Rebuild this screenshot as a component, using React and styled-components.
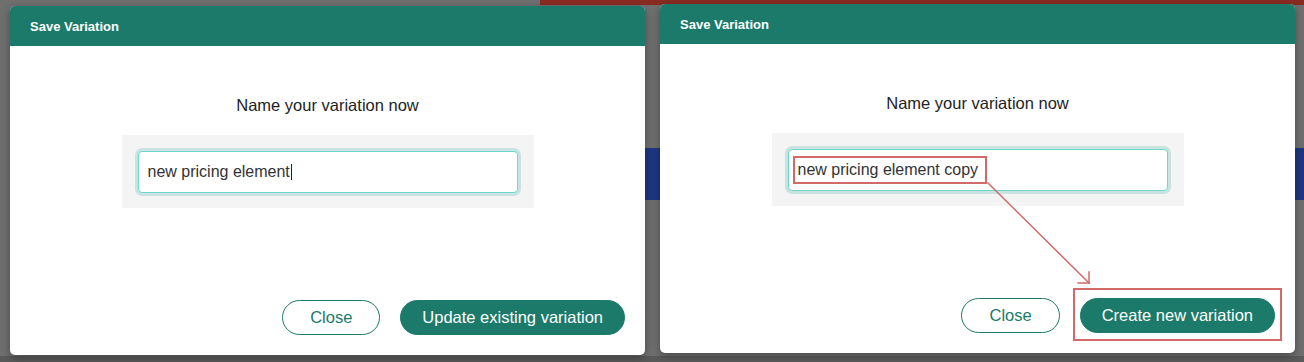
import React from 'react';
import styled, { createGlobalStyle } from 'styled-components';

const teal = '#1b7a69';
const annotation = '#d26a6a';

const GlobalStyle = createGlobalStyle`
  html, body {
    margin: 0;
    padding: 0;
    background: #6f6f6f;
  }
  body {
    font-family: "Liberation Sans", Arial, Helvetica, sans-serif;
    -webkit-font-smoothing: antialiased;
  }
`;

const Backdrop = styled.div`
  width: 1304px;
  height: 362px;
  box-sizing: border-box;
  padding-left: 10px;
  display: flex;
  align-items: flex-start;
  gap: 15px;
  overflow: hidden;
  background:
    linear-gradient(#8a2b22, #8a2b22) 540px 0 / 764px 5px no-repeat,
    linear-gradient(#1f3782, #1f3782) 645px 148px / 659px 52px no-repeat,
    linear-gradient(#5a5a5a, #5a5a5a) 0 356px / 1304px 6px no-repeat,
    #6f6f6f;
`;

const Modal = styled.div`
  position: relative;
  width: 635px;
  height: 349px;
  margin-top: ${(p) => p.$top}px;
  display: flex;
  flex-direction: column;
  background: #fff;
  border-radius: 5px;
  overflow: hidden;
  box-shadow: 0 3px 8px rgba(0, 0, 0, 0.35);
`;

const Header = styled.div`
  height: 40px;
  flex: none;
  display: flex;
  align-items: center;
  padding: 0 20px;
  background: ${teal};
  color: #fff;
  font-size: 13px;
  font-weight: bold;
`;

const Body = styled.div`
  flex: 1;
  display: flex;
  flex-direction: column;
  align-items: center;
  padding: 49px 20px 20px;
`;

const Title = styled.h3`
  margin: 0;
  font-size: 16.5px;
  line-height: 20px;
  font-weight: normal;
  color: #232323;
`;

const FieldPanel = styled.div`
  margin-top: 20px;
  width: 412px;
  box-sizing: border-box;
  padding: 16px 16px 15px;
  background: #f4f4f4;
`;

const Field = styled.div`
  height: 42px;
  box-sizing: border-box;
  display: flex;
  align-items: center;
  padding: 0 9px;
  background: #fff;
  border: 1px solid #6fd6cc;
  border-radius: 4px;
  box-shadow: 0 0 0 3px #c8e3e0;
  font-size: 16px;
  color: #333;
`;

const Caret = styled.span`
  display: inline-block;
  width: 1px;
  height: 16px;
  margin-left: 1px;
  background: #222;
`;

const Highlight = styled.span`
  margin-left: -5px;
  padding: 3px 7px 3px 3px;
  line-height: 18px;
  border: 2px solid ${annotation};
`;

const Footer = styled.div`
  margin-top: auto;
  align-self: stretch;
  display: flex;
  justify-content: flex-end;
  align-items: center;
  gap: 20px;
`;

const Button = styled.button`
  height: 35px;
  box-sizing: border-box;
  padding: 0 ${(p) => (p.$primary ? 21 : 27)}px;
  border-radius: 18px;
  border: 1px solid ${teal};
  background: ${(p) => (p.$primary ? teal : '#fff')};
  color: ${(p) => (p.$primary ? '#fff' : teal)};
  font-family: inherit;
  font-size: 16.5px;
  cursor: pointer;
`;

const Callout = styled.div`
  display: flex;
  margin: -10px -7px -8px -7px;
  padding: 8px 5px 6px 5px;
  border: 2px solid ${annotation};
`;

const Arrow = styled.svg`
  position: absolute;
  left: 320px;
  top: 172px;
  pointer-events: none;
`;

const SaveModal = ({ top, children, footer, annotated }) => (
  <Modal $top={top}>
    <Header>Save Variation</Header>
    <Body>
      <Title>Name your variation now</Title>
      <FieldPanel>
        <Field>{children}</Field>
      </FieldPanel>
      <Footer>{footer}</Footer>
    </Body>
    {annotated && (
      <Arrow width="120" height="112" viewBox="0 0 120 112">
        <g stroke={annotation} strokeWidth="1.5" fill="none" strokeLinecap="square">
          <line x1="8" y1="7" x2="109" y2="107" />
          <line x1="109" y1="107" x2="109" y2="96" />
          <line x1="109" y1="107" x2="98" y2="107" />
        </g>
      </Arrow>
    )}
  </Modal>
);

export default function App() {
  return (
    <>
      <GlobalStyle />
      <Backdrop>
        <SaveModal
          top={6}
          footer={(
            <>
              <Button>Close</Button>
              <Button $primary>Update existing variation</Button>
            </>
          )}
        >
          new pricing element
          <Caret />
        </SaveModal>
        <SaveModal
          top={4}
          annotated
          footer={(
            <>
              <Button>Close</Button>
              <Callout>
                <Button $primary>Create new variation</Button>
              </Callout>
            </>
          )}
        >
          <Highlight>new pricing element copy</Highlight>
        </SaveModal>
      </Backdrop>
    </>
  );
}
